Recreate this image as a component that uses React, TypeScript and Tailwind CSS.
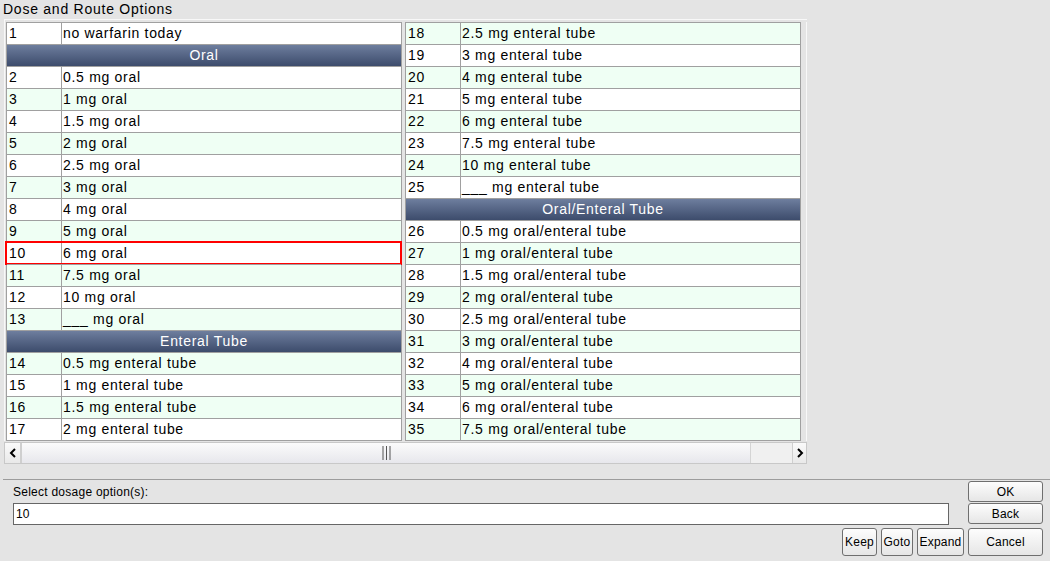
import React from 'react';

type Row =
  | { kind: 'item'; num: number; label: string }
  | { kind: 'header'; label: string };

const leftRows: Row[] = [
  { kind: 'item', num: 1, label: 'no warfarin today' },
  { kind: 'header', label: 'Oral' },
  { kind: 'item', num: 2, label: '0.5 mg oral' },
  { kind: 'item', num: 3, label: '1 mg oral' },
  { kind: 'item', num: 4, label: '1.5 mg oral' },
  { kind: 'item', num: 5, label: '2 mg oral' },
  { kind: 'item', num: 6, label: '2.5 mg oral' },
  { kind: 'item', num: 7, label: '3 mg oral' },
  { kind: 'item', num: 8, label: '4 mg oral' },
  { kind: 'item', num: 9, label: '5 mg oral' },
  { kind: 'item', num: 10, label: '6 mg oral' },
  { kind: 'item', num: 11, label: '7.5 mg oral' },
  { kind: 'item', num: 12, label: '10 mg oral' },
  { kind: 'item', num: 13, label: '___ mg oral' },
  { kind: 'header', label: 'Enteral Tube' },
  { kind: 'item', num: 14, label: '0.5 mg enteral tube' },
  { kind: 'item', num: 15, label: '1 mg enteral tube' },
  { kind: 'item', num: 16, label: '1.5 mg enteral tube' },
  { kind: 'item', num: 17, label: '2 mg enteral tube' },
];

const rightRows: Row[] = [
  { kind: 'item', num: 18, label: '2.5 mg enteral tube' },
  { kind: 'item', num: 19, label: '3 mg enteral tube' },
  { kind: 'item', num: 20, label: '4 mg enteral tube' },
  { kind: 'item', num: 21, label: '5 mg enteral tube' },
  { kind: 'item', num: 22, label: '6 mg enteral tube' },
  { kind: 'item', num: 23, label: '7.5 mg enteral tube' },
  { kind: 'item', num: 24, label: '10 mg enteral tube' },
  { kind: 'item', num: 25, label: '___ mg enteral tube' },
  { kind: 'header', label: 'Oral/Enteral Tube' },
  { kind: 'item', num: 26, label: '0.5 mg oral/enteral tube' },
  { kind: 'item', num: 27, label: '1 mg oral/enteral tube' },
  { kind: 'item', num: 28, label: '1.5 mg oral/enteral tube' },
  { kind: 'item', num: 29, label: '2 mg oral/enteral tube' },
  { kind: 'item', num: 30, label: '2.5 mg oral/enteral tube' },
  { kind: 'item', num: 31, label: '3 mg oral/enteral tube' },
  { kind: 'item', num: 32, label: '4 mg oral/enteral tube' },
  { kind: 'item', num: 33, label: '5 mg oral/enteral tube' },
  { kind: 'item', num: 34, label: '6 mg oral/enteral tube' },
  { kind: 'item', num: 35, label: '7.5 mg oral/enteral tube' },
];

const SELECTED = 10;

// rows alternate white / mint across the whole list, headers included
const Column = ({ rows, offset }: { rows: Row[]; offset: number }) => (
  <div className="w-[397px] border border-[#a0a0a0] border-t-0">
    {rows.map((row, i) => {
      if (row.kind === 'header') {
        return (
          <div
            key={row.label}
            className="h-[22px] border-t border-[#a0a0a0] bg-linear-to-b from-[#6e7e9e] to-[#3d4c6c] text-white text-center text-[14px] tracking-[0.7px] leading-[20px]"
          >
            {row.label}
          </div>
        );
      }
      const green = (i + offset) % 2 === 1;
      return (
        <div
          key={row.num}
          className={`relative flex h-[22px] border-t border-[#a0a0a0] text-[14px] tracking-[0.7px] leading-[20px] ${green ? 'bg-[#effff4]' : 'bg-white'}`}
        >
          <div className="w-[55px] shrink-0 border-r border-[#a0a0a0] pl-[2px]">{row.num}</div>
          <div className="flex-1 pl-[1px] whitespace-pre">{row.label}</div>
          {row.num === SELECTED && (
            <div className="absolute -left-[2px] -top-[2px] -right-[1px] -bottom-[1px] border-2 border-[#ff0000]" />
          )}
        </div>
      );
    })}
  </div>
);

const Button = ({ label, className }: { label: string; className: string }) => (
  <button
    className={`rounded-[3px] border border-[#6f6f6f] bg-linear-to-b from-[#fdfdfd] to-[#e6e6e6] text-[12px] tracking-[0.2px] text-black leading-none ${className}`}
  >
    {label}
  </button>
);

export default function App() {
  return (
    <div className="w-[1050px] h-[561px] overflow-hidden bg-[#e4e4e4] text-black font-['Liberation_Sans',Arial,sans-serif]">
      <div className="h-[19px] pl-[3px] text-[14px] tracking-[0.75px] leading-[19px]">Dose and Route Options</div>

      <div className="ml-[4px] w-[803px] border-t border-l border-[#f8f8f8] pt-[2px] pl-[1px]">
        <div className="flex gap-[3px]">
          <Column rows={leftRows} offset={0} />
          <Column rows={rightRows} offset={19} />
          <div className="ml-[2px] w-[1px] bg-[#f8f8f8]" />
        </div>
      </div>

      {/* horizontal scrollbar */}
      <div className="ml-[4px] mt-[1px] flex h-[22px] w-[803px] border border-[#c8c8c8] bg-[#ededed]">
        <div className="flex w-[17px] items-center justify-center border-r-2 border-[#cfcfcf] bg-linear-to-b from-[#fafafa] to-[#e9e9e9]">
          <svg width="8" height="10" viewBox="0 0 8 10">
            <path d="M6 1 L2 5 L6 9" stroke="#000" strokeWidth="2" fill="none" />
          </svg>
        </div>
        <div className="flex w-[729px] items-center justify-center border-r border-[#d4d4d4] bg-linear-to-b from-[#fbfbfb] to-[#e7e7ec]">
          <svg width="9" height="14" viewBox="0 0 9 14">
            <path d="M1 0 V14 M4.5 0 V14 M8 0 V14" stroke="#555" strokeWidth="1" />
          </svg>
        </div>
        <div className="w-[41px] bg-[#f0f0f0]" />
        <div className="flex flex-1 items-center justify-center border-l border-[#cfcfcf] bg-linear-to-b from-[#fafafa] to-[#e9e9e9]">
          <svg width="8" height="10" viewBox="0 0 8 10">
            <path d="M2 1 L6 5 L2 9" stroke="#000" strokeWidth="2" fill="none" />
          </svg>
        </div>
      </div>

      <div className="mt-[15px] ml-[3px] border-t border-[#9c9c9c]" />

      <div className="flex flex-col pl-[13px] pr-[7px] pt-[1px]">
        <div className="flex h-[21px] items-center justify-between">
          <div className="pt-[1px] text-[12px] tracking-[0.25px]">Select dosage option(s):</div>
          <Button label="OK" className="h-[21px] w-[75px]" />
        </div>
        <div className="mt-[1px] flex h-[21px] items-center justify-between">
          <div className="flex h-[22px] w-[936px] items-center border border-[#666] bg-white pl-[2px] text-[12px]">10</div>
          <Button label="Back" className="h-[21px] w-[75px]" />
        </div>
        <div className="mt-[4px] flex h-[28px] justify-end gap-[4px]">
          <Button label="Keep" className="h-[28px] w-[35px]" />
          <Button label="Goto" className="h-[28px] w-[32px]" />
          <Button label="Expand" className="h-[28px] w-[47px]" />
          <Button label="Cancel" className="h-[28px] w-[75px]" />
        </div>
      </div>
    </div>
  );
}
